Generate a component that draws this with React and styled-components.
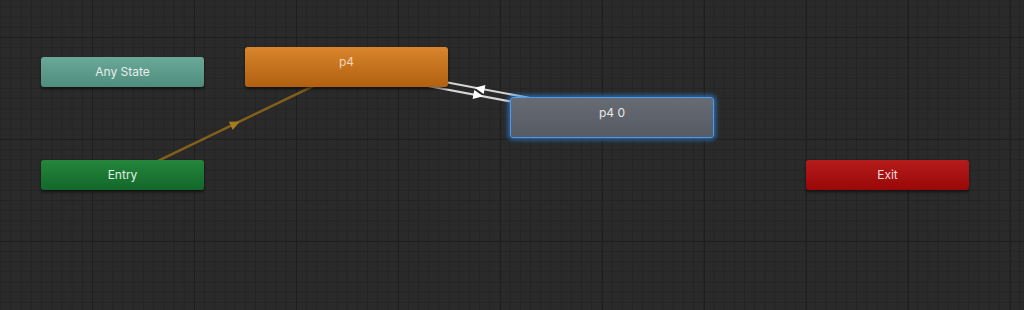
import React from 'react';
import styled, { createGlobalStyle, css } from 'styled-components';

const GlobalStyle = createGlobalStyle`
  html, body {
    margin: 0;
    padding: 0;
    background: #2a2a2a;
  }
  body {
    font-family: Inter, "Noto Sans", "Liberation Sans", sans-serif;
  }
`;

const Canvas = styled.div`
  position: relative;
  width: 1024px;
  height: 310px;
  overflow: hidden;
  background-color: #2a2a2a;
  background-image:
    linear-gradient(#1e1e1e 1px, transparent 1px),
    linear-gradient(90deg, #1e1e1e 1px, transparent 1px),
    linear-gradient(#242424 1px, transparent 1px),
    linear-gradient(90deg, #242424 1px, transparent 1px);
  background-size: 102px 102px, 102px 102px, 10.2px 10.2px, 10.2px 10.2px;
  background-position: 92px 37px, 92px 37px, 92px 37px, 92px 37px;
`;

const Edges = styled.svg`
  position: absolute;
  left: 0;
  top: 0;
  width: 1024px;
  height: 310px;
`;

const variants = {
  any: css`
    background: linear-gradient(#6aa898, #4f8e7e);
    color: #e6eeeb;
  `,
  state: css`
    background: linear-gradient(#da852e, #b0600f);
    color: #f3d6b6;
  `,
  selected: css`
    background: linear-gradient(#676b73, #565a62);
    color: #e8e8e8;
    border: 1px solid #4b9be6;
    box-shadow: 0 0 4px 2px rgba(45, 125, 215, 0.75);
  `,
  entry: css`
    background: linear-gradient(#24863b, #12682a);
    color: #e2efe5;
  `,
  exit: css`
    background: linear-gradient(#b51c1c, #990707);
    color: #f3dada;
  `,
};

const Node = styled.div`
  position: absolute;
  box-sizing: border-box;
  display: flex;
  justify-content: center;
  align-items: ${(p) => (p.$top ? 'flex-start' : 'center')};
  padding-top: ${(p) => p.$top || 0}px;
  border-radius: 3px;
  font-size: 12px;
  line-height: 14px;
  box-shadow: 0 2px 3px rgba(0, 0, 0, 0.55);
  ${(p) => variants[p.$kind]}
`;

const nodes = [
  { label: 'Any State', kind: 'any', x: 41, y: 57, w: 163, h: 30 },
  { label: 'p4', kind: 'state', x: 245, y: 47, w: 203, h: 40, top: 8 },
  { label: 'p4 0', kind: 'selected', x: 510, y: 97, w: 204, h: 41, top: 8 },
  { label: 'Entry', kind: 'entry', x: 41, y: 160, w: 163, h: 30 },
  { label: 'Exit', kind: 'exit', x: 806, y: 160, w: 163, h: 30 },
];

// transitions: from -> to, offset to the right of the direction of travel
const links = [
  { a: [122, 175], b: [346, 67], off: 3, color: '#80601a', head: '#a57b1f', w: 2.5 },
  { a: [612, 117], b: [346, 67], off: 3.5, color: '#d6d6d6', head: '#ffffff', w: 2 },
  { a: [346, 67], b: [612, 117], off: 3.5, color: '#d6d6d6', head: '#ffffff', w: 2 },
];

const Link = ({ a, b, off, color, head, w }) => {
  const dx = b[0] - a[0];
  const dy = b[1] - a[1];
  const len = Math.hypot(dx, dy);
  const ux = dx / len;
  const uy = dy / len;
  const px = -uy * off;
  const py = ux * off;
  const x1 = a[0] + px, y1 = a[1] + py;
  const x2 = b[0] + px, y2 = b[1] + py;
  const mx = (x1 + x2) / 2, my = (y1 + y2) / 2;
  const L = 5, H = 4.5;
  const tip = [mx + ux * L, my + uy * L];
  const l = [mx - ux * L - uy * H, my - uy * L + ux * H];
  const r = [mx - ux * L + uy * H, my - uy * L - ux * H];
  return (
    <g>
      <line x1={x1} y1={y1} x2={x2} y2={y2} stroke={color} strokeWidth={w} />
      <polygon points={`${tip.join(',')} ${l.join(',')} ${r.join(',')}`} fill={head} />
    </g>
  );
};

export default function App() {
  return (
    <>
      <GlobalStyle />
      <Canvas>
        <Edges viewBox="0 0 1024 310">
          {links.map((l, i) => (
            <Link key={i} {...l} />
          ))}
        </Edges>
        {nodes.map((n) => (
          <Node
            key={n.label}
            $kind={n.kind}
            $top={n.top}
            style={{ left: n.x, top: n.y, width: n.w, height: n.h }}
          >
            {n.label}
          </Node>
        ))}
      </Canvas>
    </>
  );
}
